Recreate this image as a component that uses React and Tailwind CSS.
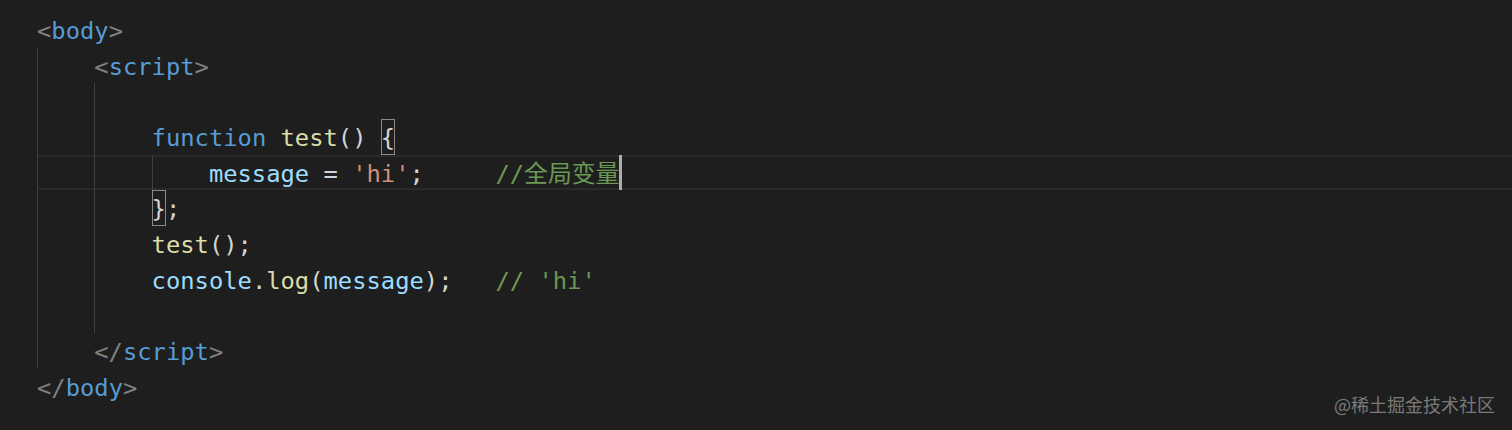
import React from "react";

// VS Code Dark+ palette
const C = {
  tag: "text-[#808080]",
  name: "text-[#569cd6]",
  kw: "text-[#569cd6]",
  fn: "text-[#dcdcaa]",
  vr: "text-[#9cdcfe]",
  str: "text-[#ce9178]",
  cm: "text-[#6a9955]",
  p: "text-[#d4d4d4]",
};

// each line: guides = number of indent guides, indent = leading indent levels, tokens
const lines = [
  { guides: 0, indent: 0, tokens: [["<", C.tag], ["body", C.name], [">", C.tag]] },
  { guides: 1, indent: 1, tokens: [["<", C.tag], ["script", C.name], [">", C.tag]] },
  { guides: 2, indent: 2, tokens: [] },
  {
    guides: 2,
    indent: 2,
    tokens: [["function", C.kw], [" ", C.p], ["test", C.fn], ["() ", C.p], ["{", C.p, "box"]],
  },
  {
    guides: 3,
    indent: 3,
    current: true,
    tokens: [
      ["message", C.vr],
      [" = ", C.p],
      ["'hi'", C.str],
      [";", C.p],
      ["     ", C.p],
      ["//全局变量", C.cm],
      ["", C.p, "cursor"],
    ],
  },
  { guides: 2, indent: 2, tokens: [["}", C.p, "box"], [";", C.p]] },
  { guides: 2, indent: 2, tokens: [["test", C.fn], ["();", C.p]] },
  {
    guides: 2,
    indent: 2,
    tokens: [
      ["console", C.vr],
      [".", C.p],
      ["log", C.fn],
      ["(", C.p],
      ["message", C.vr],
      [");", C.p],
      ["   ", C.p],
      ["// 'hi'", C.cm],
    ],
  },
  { guides: 2, indent: 2, tokens: [] },
  { guides: 1, indent: 1, tokens: [["</", C.tag], ["script", C.name], [">", C.tag]] },
  { guides: 0, indent: 0, tokens: [["</", C.tag], ["body", C.name], [">", C.tag]] },
];

function Token({ text, cls, kind }) {
  if (kind === "cursor") {
    return <span className="h-full w-[3px] bg-[#aeafad]" />;
  }
  if (kind === "box") {
    return (
      <span className={`flex h-full w-[1ch] items-center justify-center border border-[#8a8a8a] ${cls}`}>
        <span className="translate-y-[2px]">{text}</span>
      </span>
    );
  }
  return <span className={`translate-y-[2px] whitespace-pre ${cls}`}>{text}</span>;
}

function Line({ line }) {
  const guides = Array.from({ length: line.indent });
  return (
    <div
      className={`flex h-[35.7px] items-center ${
        line.current ? "shadow-[inset_0_2px_0_#2a2a2a,inset_0_-2px_0_#2a2a2a]" : ""
      }`}
    >
      {guides.map((_, i) => (
        <span
          key={i}
          className={`h-full w-[4ch] shrink-0 ${i < line.guides ? "border-l border-[#404040]" : ""}`}
        />
      ))}
      {line.tokens.map(([t, c, k], i) => (
        <Token key={i} text={t} cls={c} kind={k} />
      ))}
    </div>
  );
}

export default function App() {
  return (
    <div className="relative h-[430px] w-full overflow-hidden bg-[#1e1e1e]">
      <div
        className="pl-[37px] pt-[12px] text-[23.8px] leading-[35.7px]"
        style={{ fontFamily: '"DejaVu Sans Mono", "Noto Sans CJK SC", monospace' }}
      >
        {lines.map((l, i) => (
          <Line key={i} line={l} />
        ))}
      </div>

      {/* watermark */}
      <div className="absolute bottom-[14px] right-[17px] text-[18px] leading-[24px] text-[#7a7a7a] [font-family:'Noto_Sans_CJK_SC',sans-serif]">
        @稀土掘金技术社区
      </div>
    </div>
  );
}
